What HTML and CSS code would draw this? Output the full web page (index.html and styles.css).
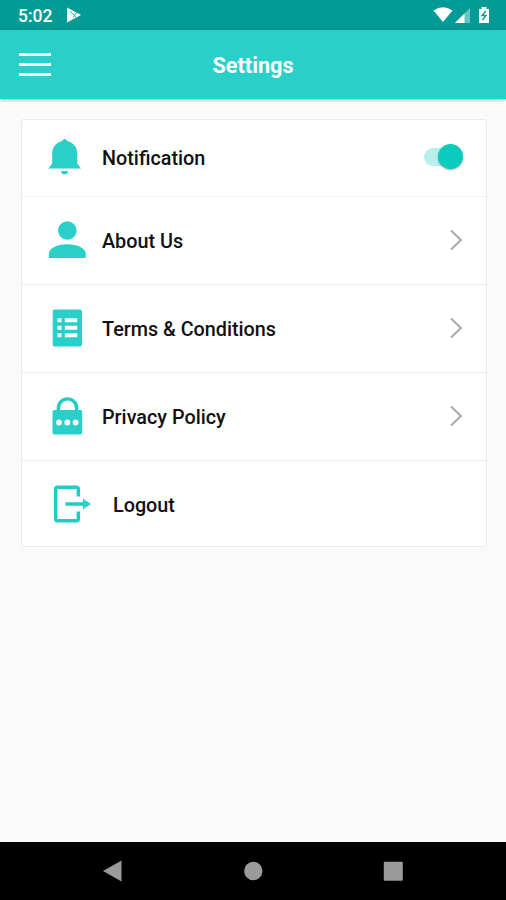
FILE: index.html
```
<!DOCTYPE html>
<html lang="en">
<head>
  <meta charset="utf-8">
  <title>Settings</title>
  <link rel="stylesheet" href="styles.css">
</head>
<body>
  <div class="status-bar">
    <span class="time">5:02</span>
    <svg class="play" width="16" height="16" viewBox="0 0 16 16">
      <path d="M1 0.5L15 8L1 15.5Z" fill="#fff"/>
      <path d="M4 4L10.5 10.5M7 10.5L10.5 5.5" stroke="#029b96" stroke-width="0.8" fill="none"/>
    </svg>
    <svg class="system" width="58" height="18" viewBox="0 0 58 18">
      <path d="M0.5 4.5Q10 -2.2 19.5 4.5L10 16Z" fill="#fff"/>
      <path d="M37 2V17H22Z" fill="#fff" opacity="0.4"/>
      <path d="M31.5 7.5V17H22Z" fill="#fff"/>
      <path d="M46 3H48.5V1H53.5V3H56V17H46Z" fill="#fff"/>
      <path d="M53 5L49 9.5H53L49.5 14" stroke="#029b96" stroke-width="1.3" fill="none"/>
    </svg>
  </div>

  <header class="app-bar">
    <button class="menu" aria-label="Menu">
      <span></span>
      <span></span>
      <span></span>
    </button>
    <h1>Settings</h1>
  </header>

  <main>
    <ul class="settings">
      <li class="row notification">
        <svg class="icon" viewBox="0 0 48 43">
          <path d="M16.4 4A2.4 2.4 0 0 1 21.1 4C27.5 5.5 31.3 10.5 31.3 16.5V26.5L35 31.5H2.3L6.2 26.5V16.5C6.2 10.5 10 5.5 16.4 4ZM15 34H22Q21.5 37.5 18.5 37.5T15 34Z"/>
        </svg>
        <span class="label">Notification</span>
        <span class="switch"></span>
      </li>
      <li class="row">
        <svg class="icon" viewBox="0 0 48 43">
          <circle cx="21.3" cy="11.5" r="9.3"/>
          <path d="M2.8 39V35C2.8 29.5 11 25.3 21.3 25.3S39.8 29.5 39.8 35V39Z"/>
        </svg>
        <span class="label">About Us</span>
        <svg class="arrow" viewBox="0 0 14 22"><path d="M2 1.5L12 11L2 20.5"/></svg>
      </li>
      <li class="row">
        <svg class="icon" viewBox="0 0 48 43">
          <rect x="6.7" y="2.5" width="29.3" height="37" rx="2"/>
          <path class="cut" d="M11.5 11.2h4v4h-4zM18.8 11.2h12.4v4H18.8zM11.5 18.7h4v4h-4zM18.8 18.7h12.4v4H18.8zM11.5 26.2h4v4h-4zM18.8 26.2h12.4v4H18.8z"/>
        </svg>
        <span class="label">Terms &amp; Conditions</span>
        <svg class="arrow" viewBox="0 0 14 22"><path d="M2 1.5L12 11L2 20.5"/></svg>
      </li>
      <li class="row">
        <svg class="icon" viewBox="0 0 48 43">
          <path class="line" d="M12.4 16V13A9.1 9.1 0 0 1 30.6 13V16"/>
          <rect x="6.5" y="15" width="29.7" height="24.5" rx="2"/>
          <circle class="cut" cx="13" cy="27.5" r="2.9"/>
          <circle class="cut" cx="21.3" cy="27.5" r="2.9"/>
          <circle class="cut" cx="29.6" cy="27.5" r="2.9"/>
        </svg>
        <span class="label">Privacy Policy</span>
        <svg class="arrow" viewBox="0 0 14 22"><path d="M2 1.5L12 11L2 20.5"/></svg>
      </li>
      <li class="row logout">
        <svg class="icon" viewBox="0 0 48 43">
          <path class="line" d="M32.3 14.5V7Q32.3 5.2 30.5 5.2H11.5Q9.7 5.2 9.7 7V37Q9.7 38.8 11.5 38.8H30.5Q32.3 38.8 32.3 37V29.5M19.5 22H39"/>
          <path d="M37 16.7L45 22L37 27.3Z"/>
        </svg>
        <span class="label">Logout</span>
      </li>
    </ul>
  </main>

  <nav class="nav-bar">
    <svg viewBox="0 0 22 22"><path d="M1 11L19.5 0.5V21.5Z"/></svg>
    <svg viewBox="0 0 22 22"><circle cx="11.3" cy="11" r="9.2"/></svg>
    <svg viewBox="0 0 22 22"><rect x="1.8" y="1.8" width="19" height="19" rx="1"/></svg>
  </nav>
</body>
</html>
```

FILE: styles.css
```
* {
  box-sizing: border-box;
}
body {
  margin: 0;
  height: 900px;
  display: flex;
  flex-direction: column;
  background: #fafafa;
  font-family: Roboto, sans-serif;
  overflow: hidden;
}
.status-bar {
  height: 30px;
  padding: 0 15px 0 18px;
  display: flex;
  align-items: center;
  background: #029b96;
  color: #fff;
}
.time {
  width: 48px;
  padding-top: 2px;
  font-size: 17.5px;
  font-weight: 500;
}
.system {
  margin-left: auto;
}
.app-bar {
  height: 69px;
  display: grid;
  grid-template-columns: 1fr auto 1fr;
  align-items: center;
  padding: 0 19px;
  background: #28d0c9;
  box-shadow: 0 1px 3px rgba(0, 0, 0, 0.3);
}
.menu {
  width: 32px;
  padding: 0;
  border: none;
  background: none;
  display: flex;
  flex-direction: column;
  gap: 7px;
}
.menu span {
  height: 3px;
  background: #fff;
}
h1 {
  margin: 1px 0 0;
  color: #fff;
  font-size: 21.7px;
  font-weight: 700;
}
main {
  flex: 1;
  padding: 20px 19px 0 21px;
}
.settings {
  margin: 0;
  padding: 0;
  list-style: none;
  background: #fff;
  border: 1px solid #ececec;
  border-radius: 2px;
}
.row {
  height: 88px;
  padding: 0 23px 0 24px;
  display: flex;
  align-items: center;
  gap: 8px;
  border-bottom: 1px solid #ececec;
}
.notification {
  height: 77px;
  border-bottom-color: #f3f3f3;
}
.logout {
  height: 85px;
  gap: 19px;
  border-bottom: none;
}
.icon {
  width: 48px;
  height: 43px;
  fill: #28d0c9;
}
.icon .cut {
  fill: #fff;
}
.icon .line {
  fill: none;
  stroke: #20ccc4;
  stroke-width: 3.4;
}
.label {
  flex: 1;
  padding-top: 2px;
  font-size: 19.8px;
  font-weight: 500;
  color: #111;
}
.notification .label {
  padding-top: 0;
}
.logout .label {
  padding-top: 3px;
}
.switch {
  width: 38px;
  height: 18px;
  margin: 0 1px 2px 0;
  border-radius: 9px;
  background: #b5f1ec;
  position: relative;
}
.switch::after {
  content: "";
  position: absolute;
  right: -1px;
  top: -4px;
  width: 25px;
  height: 25px;
  border-radius: 50%;
  background: #09cbbe;
  box-shadow: 0 1px 2px rgba(0, 0, 0, 0.35);
}
.arrow {
  width: 14px;
  height: 22px;
  margin-bottom: 1px;
  fill: none;
  stroke: #aaa;
  stroke-width: 2;
}
.nav-bar {
  height: 58px;
  padding: 0 102px;
  display: flex;
  justify-content: space-between;
  align-items: center;
  background: #000;
}
.nav-bar svg {
  width: 22px;
  height: 22px;
  fill: #9b9b9b;
}
```
